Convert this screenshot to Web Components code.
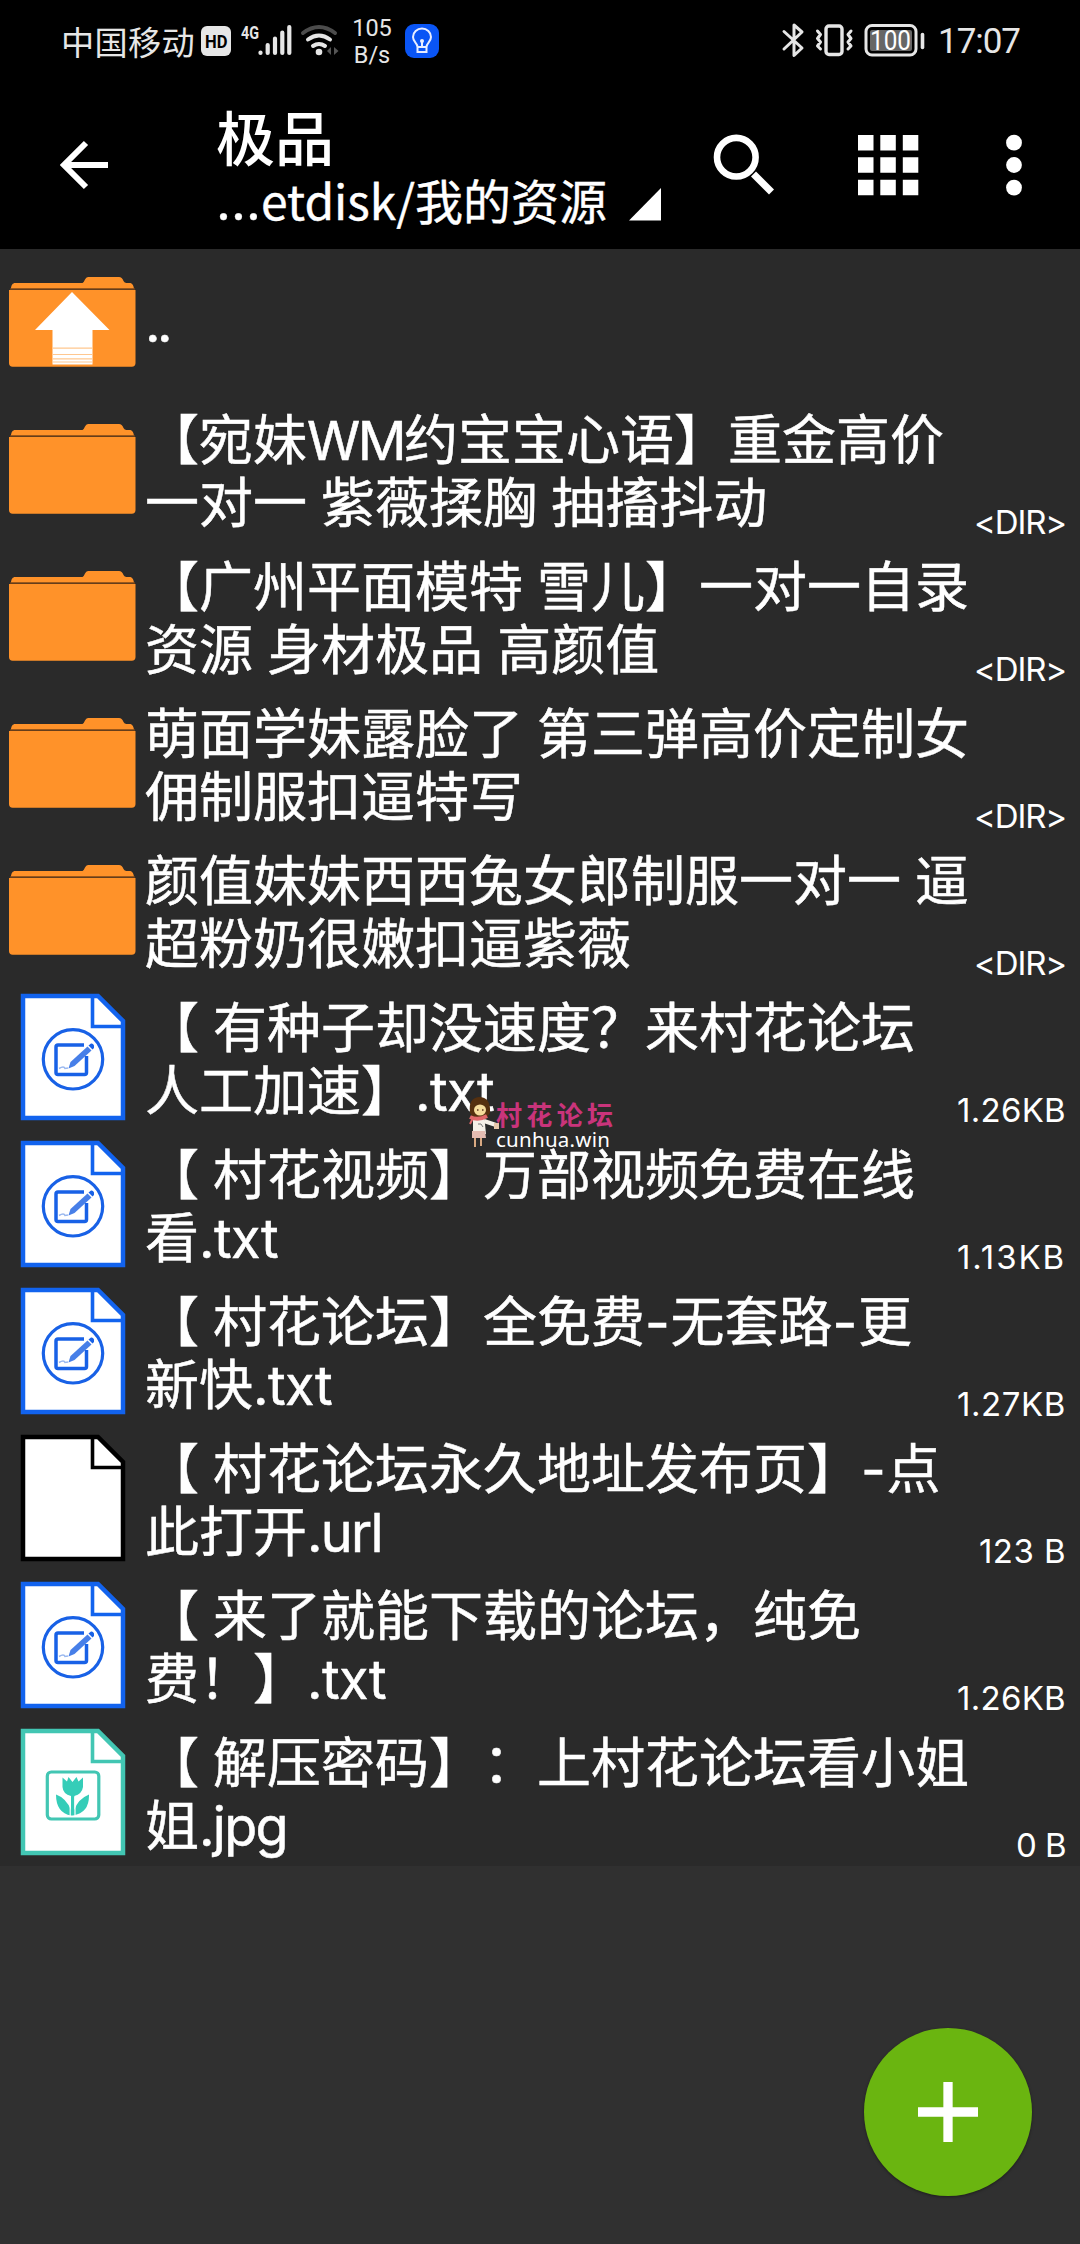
<!DOCTYPE html>
<html lang="zh-CN">
<head>
<meta charset="utf-8">
<title>文件管理</title>
<style>
html,body{margin:0;padding:0;background:#303030}
body{font-family:"Inter","Noto Sans CJK SC",sans-serif;color:#fff}
</style>
</head>
<body>
<file-app></file-app>
<script>
const define=(name,html,setup)=>customElements.define(name,class extends HTMLElement{
  connectedCallback(){
    if(this.shadowRoot)return;
    const root=this.attachShadow({mode:'open'});
    root.innerHTML=typeof html==='function'?html(this):html;
    if(setup)setup(this,root);
  }
});

/* Inline run of text whose tracking is tuned to an exact advance width. */
define('fit-text','<style>:host{display:inline-block;flex:none;white-space:pre}</style><span><slot></slot></span>',el=>{
  const n=[...el.textContent].length, want=+el.getAttribute('w');
  const now=el.getBoundingClientRect().width;
  el.style.letterSpacing=((want-now)/n)+'px';
});

define('status-bar',`<style>
:host{display:flex;height:84px;box-sizing:border-box;background:#000;color:#e6e6e6;justify-content:space-between;padding:0 60px 0 61px}
.g{display:flex;align-items:center;height:83px}
.carrier{font:400 33.2px/40px "Noto Sans CJK SC",sans-serif;margin-top:-2px}
.speed{display:flex;flex-direction:column;align-items:center;width:40px;margin-left:12px;font:400 23.5px/27px Roboto,sans-serif;margin-top:1px}
.time{font:400 35px/40px Roboto,sans-serif;margin-left:13px;margin-top:1px}
svg{display:block}
</style>
<div class="g"><fit-text class="carrier" w="134">中国移动</fit-text>
<svg width="145" height="84" viewBox="195 0 145 84">
<rect x="201" y="26" width="30" height="30" rx="6" fill="#e6e6e6"/>
<text x="205" y="48" font-family="Roboto" font-weight="700" font-size="18" textLength="22.5" lengthAdjust="spacingAndGlyphs" fill="#000">HD</text>
<text x="241" y="38.500" font-family="Roboto" font-weight="700" font-size="19" textLength="18" lengthAdjust="spacingAndGlyphs" fill="#e6e6e6">4G</text>
<g stroke="#e6e6e6" stroke-width="4.200" stroke-linecap="round"><path d="M260.500 52.500v.5M267.700 45v8M275 38.500V53M282.300 32.500V53M289.300 27V53"/></g>
<g fill="none" stroke-linecap="round" stroke-width="4"><path d="M303 33q16-12 32 0" stroke="#4c4c4c"/><path d="M308 39.500q11-8 22 0M313 46q6-4 12 0" stroke="#e6e6e6"/></g><circle cx="319" cy="52" r="3.300" fill="#e6e6e6"/>
<path d="M331 47v8l-4-4zM334 47v8l4.500-4z" fill="#555"/></svg>
<div class="speed"><span>105</span><span>B/s</span></div>
<svg width="48" height="84" viewBox="392 0 48 84"><rect x="405" y="24" width="34" height="34" rx="9" fill="#0a55f5"/><g fill="none" stroke="#e8edff" stroke-width="2"><path d="M417.500 47c0-4-4.500-5-4.500-10a9 8.500 0 0 1 18 0c0 5-4.500 6-4.500 10z"/><path d="M417.500 48v4h9v-4M422 41v6"/></g><circle cx="422" cy="41" r="2" fill="#e8edff"/></svg></div>
<div class="g"><svg width="145" height="84" viewBox="780 0 145 84" fill="none" stroke="#e6e6e6" stroke-linecap="round" stroke-linejoin="round">
<path d="M784 31.500 L802 48 L794 55.500 V25 L802 32 L784 49" stroke-width="3"/>
<rect x="826" y="26" width="16" height="28.500" rx="3" stroke-width="3.400"/>
<path d="M817.500 31l3 3.500-3 4 3 3.500-3 4 3 3M851 31l-3 3.500 3 4-3 3.500 3 4-3 3" stroke-width="3"/>
<rect x="866" y="25.500" width="50" height="29.500" rx="6" stroke-width="3"/>
<rect x="870" y="30" width="42" height="21" rx="2" fill="#666" stroke="none"/>
<text x="870" y="50" fill="#fff" stroke="none" font-family="Roboto" font-size="27" textLength="41" lengthAdjust="spacingAndGlyphs">100</text>
<path d="M922.500 34.500v13" stroke-width="3.600"/></svg>
<fit-text class="time" w="82">17:07</fit-text></div>`);

define('app-bar',`<style>
:host{display:flex;height:165px;background:#000;color:#fff}
svg{display:block;flex:none}
.t{display:flex;flex-direction:column;width:412px;padding-top:17px;box-sizing:border-box;white-space:nowrap}
.a{font:500 59px/70px "Noto Sans CJK SC",sans-serif;height:64px}
.b{font:400 48px/64px "Noto Sans CJK SC",sans-serif;height:64px;margin-top:2px;-webkit-text-stroke:.4px #fff}
.e{font-family:Inter;font-size:52px;line-height:50px}
</style>
<svg width="216" height="165" viewBox="0 84 216 165" fill="none" stroke="#fff" stroke-width="6"><path d="M108 165H65M86 143 L64 165 L86 187"/></svg>
<div class="t"><div class="a">极品</div><div class="b"><fit-text class="e" w="45">…</fit-text><fit-text w="154">etdisk/</fit-text>我的资源</div></div>
<svg width="452" height="165" viewBox="628 84 452 165" fill="#fff">
<path d="M661 188v32.500H629z"/>
<circle cx="736.300" cy="157.200" r="19.300" fill="none" stroke="#fff" stroke-width="6.600"/>
<path d="M753.500 174 771.500 192" stroke="#fff" stroke-width="7"/>
<path d="M858 135h15.500v15.500h-15.500zM880.300 135h15.500v15.500h-15.500zM902.800 135h15.500v15.500h-15.500zM858 157.300h15.500v15.500h-15.500zM880.300 157.300h15.500v15.500h-15.500zM902.800 157.300h15.500v15.500h-15.500zM858 179.700h15.500v15.500h-15.500zM880.300 179.700h15.500v15.500h-15.500zM902.800 179.700h15.500v15.500h-15.500z"/>
<circle cx="1014" cy="142.700" r="7.900"/><circle cx="1014" cy="165" r="7.900"/><circle cx="1014" cy="187.600" r="7.900"/></svg>`);

const folder=`<path d="M11 40c0-4 2-6 4-6H82.500q1.500-1 2.500-3.500Q86 28 88 28H119q3 0 4.500 4 1 2 3 2h4q3 1 3.500 6z" fill="#ff9229"/><path d="M10 40H135" stroke="#7a4517" stroke-width="1.500"/><path d="M9 41H135.500V114q0 3.700-3.700 3.700H12.700Q9 117.700 9 114z" fill="#ff9229"/>`;
const sheet=c=>`<path d="M23 12H98L123 37V134H23z" fill="#fff" stroke="${c}" stroke-width="4.500"/><path d="M92.500 12V42.500H123" fill="none" stroke="${c}" stroke-width="3.600"/>`;
const icons={
  folder,
  up:folder+`<path d="M72 43 109.500 81H92.500V115.500H52.500V81H35z" fill="#fff"/><path d="M52.500 99.200h40M52.500 105.500h40M52.500 109.800h40M52.500 113h40" stroke="#ffc78f" stroke-width="1.200"/>`,
  file:sheet('#000'),
  txt:sheet('#1263ee')+`<g fill="none" stroke="#1861e6"><circle cx="73" cy="75.300" r="29.700" stroke-width="3.200"/><path d="M84 61H58q-2 0-2 2V88.500q0 2 2 2H84.500q2 0 2-2V72" stroke-width="3.500"/></g><path d="M68.500 84.500 70.500 78 87.500 62.500 91.500 66.500 74.500 82z" fill="#477fe8"/><path d="M88.500 61.500 91 59.500Q93 59 94 61.500L94 64 92.500 65.500z" fill="#1861e6"/><path d="M59 84.500q5-3 6 0l3-.5" fill="none" stroke="#9ab8ef" stroke-width="1.500"/>`,
  img:sheet('#42c6b3')+`<rect x="47.300" y="53" width="51.500" height="47" rx="4" fill="none" stroke="#42c6b3" stroke-width="3.200"/><g fill="#35cdb8"><path d="M62.500 58.500 67 62.500 68.500 58 72.500 63 76.500 58 78.500 62.500 83 58.500V68Q82 75 74.300 77V91Q78 80 89 75.500 89.500 94 73 96.500H71.200Q56 94 56 75.500 66 79 71 91V77Q63 75 62.500 68z"/></g><path d="M70.200 78v19M75 78v18" stroke="#fff" stroke-width="1.200"/>`
};

define('file-icon',el=>`<style>:host{display:block;flex:none;width:145px;height:147px}svg{display:block}</style><svg width="145" height="147" viewBox="0 0 145 147">${icons[el.getAttribute('kind')]}</svg>`);

define('file-row',`<style>
:host{display:flex;height:147px}
.n{flex:none;width:828px;padding-top:9px;font:400 54px/63px "Noto Sans CJK SC",sans-serif;text-spacing-trim:space-all;white-space:pre;word-spacing:2px;-webkit-text-stroke:.5px #fff}
.n div{height:63px}
.n fit-text{font-family:Inter,sans-serif;line-height:60px}
.n.up{padding-top:38px}
.s{flex:1;display:flex;justify-content:flex-end;align-items:flex-end;margin-left:-40px;padding:0 14px 1px 0;font:400 33px/40px Inter,sans-serif;white-space:nowrap}
</style>`,(el,root)=>{
  const kind=el.getAttribute('kind'),size=el.getAttribute('size')||'';
  const lines=el.getAttribute('name').split('|').map(l=>'<div>'+l.replace(/\{([^:}]+):([\d.]+)\}/g,'<fit-text w="$2">$1</fit-text>')+'</div>').join('');
  const w={'<DIR>':92,'123 B':87,'0 B':50}[size]||109;
  root.innerHTML+=`<file-icon kind="${kind}"></file-icon><div class="n ${kind}">${lines}</div><div class="s">${size?`<fit-text w="${w}">${size.replace(/</g,'&lt;')}</fit-text>`:''}</div>`;
});

const rows=[
['up','{..:24}',''],
['folder','【宛妹{WM:97}约宝宝心语】重金高价|一对一 紫薇揉胸 抽搐抖动','<DIR>'],
['folder','【广州平面模特 雪儿】一对一自录|资源 身材极品 高颜值','<DIR>'],
['folder','萌面学妹露脸了 第三弹高价定制女|佣制服扣逼特写','<DIR>'],
['folder','颜值妹妹西西兔女郎制服一对一 逼|超粉奶很嫩扣逼紫薇','<DIR>'],
['txt','【 有种子却没速度？来村花论坛|人工加速】{.txt:79}','1.26KB'],
['txt','【 村花视频】万部视频免费在线|看{.txt:79}','1.13KB'],
['txt','【 村花论坛】全免费{-:25.5}无套路{-:25.5}更|新快{.txt:79}','1.27KB'],
['file','【 村花论坛永久地址发布页】{-:25.5}点|此打开{.url:75}','123 B'],
['txt','【 来了就能下载的论坛，纯免|费！】{.txt:79}','1.26KB'],
['img','【 解压密码】：上村花论坛看小姐|姐{.jpg:88}','0 B']];

define('file-list','<style>:host{display:flex;flex-direction:column;background:#2a2a2a}</style>',(el,root)=>{
  for(const [kind,name,size] of rows){
    const r=document.createElement('file-row');
    r.setAttribute('kind',kind);r.setAttribute('name',name);r.setAttribute('size',size);
    root.append(r);
  }
});

define('forum-badge',`<style>
:host{position:absolute;left:466px;top:1097px;display:flex}
svg{display:block}
.t{display:flex;flex-direction:column;margin-left:-3px}
.p{font:700 26px/34px "Noto Sans CJK SC",sans-serif;color:#c9347b}
.w{font:400 20.5px/22px "Noto Sans",sans-serif;color:#fff;margin-top:-3px}
</style>
<svg width="33" height="52" viewBox="466 1097 33 52">
<path d="M475 1137v10M481 1136v10" stroke="#d9a982" stroke-width="2"/>
<path d="M473 1114h11l2 20h-13z" fill="#f5f0e8"/><path d="M484 1121l12 4" stroke="#f5f0e8" stroke-width="4"/>
<path d="M472 1131h13l1 7h-14z" fill="#e4bcb2"/>
<path d="M470 1113q-2-15 9-16 12 0 11 16l-3 4h-14z" fill="#55300f"/>
<ellipse cx="480" cy="1110" rx="6" ry="5.500" fill="#f5dc9c"/><path d="M477 1110h1.500M482 1110h1.500" stroke="#5a3420" stroke-width="1.500"/>
<path d="M470 1117q8 4 17-1" stroke="#e0676b" stroke-width="4" fill="none"/><path d="M473 1118l-3 6" stroke="#e0676b" stroke-width="2"/>
<path d="M478 1124h3l2 3" stroke="#777" fill="none"/><path d="M494 1123h5v6h-5z" fill="#e8c7aa"/></svg>
<div class="t"><fit-text class="p" w="129">村花论坛</fit-text><fit-text class="w" w="124">cunhua.win</fit-text></div>`);

define('add-button',`<style>:host{position:absolute;left:864px;top:2028px;width:168px;height:168px;border-radius:50%;background:#6ab510;box-shadow:0 1px 3px #0006}svg{display:block}</style>
<svg width="168" height="168" viewBox="0 0 168 168"><path d="M84 54v60M54 84h60" stroke="#fff" stroke-width="9.300"/></svg>`);

define('file-app',`<style>:host{display:flex;flex-direction:column;position:relative;width:1080px;height:2244px;background:#303030;overflow:hidden}</style>
<status-bar></status-bar><app-bar></app-bar><file-list></file-list><forum-badge></forum-badge><add-button></add-button>`);
</script>
</body>
</html>
